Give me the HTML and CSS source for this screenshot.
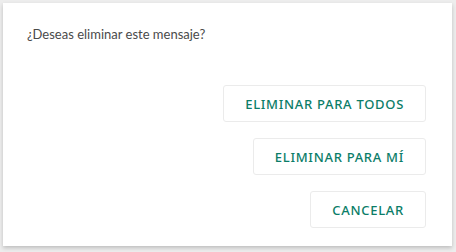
FILE: index.html
```html
<!DOCTYPE html>
<html lang="es">
<head>
    <meta charset="UTF-8">
    <meta name="viewport" content="width=device-width, initial-scale=1.0">
    <title>Eliminar mensaje</title>
    <link rel="stylesheet" href="styles.css">
</head>
<body>
    <div class="dialog">
        <div class="dialog-title">¿Deseas eliminar este mensaje?</div>
        <div class="dialog-actions">
            <button class="btn">ELIMINAR PARA TODOS</button>
            <button class="btn">ELIMINAR PARA MÍ</button>
            <button class="btn">CANCELAR</button>
        </div>
    </div>
</body>
</html>
```

FILE: styles.css
```css
html, body {
    margin: 0;
    height: 100%;
}
body {
    font-family: "Noto Sans", "Open Sans", Arial, sans-serif;
    background-color: #ededed;
    padding: 3px 4px 6px 3px;
    box-sizing: border-box;
}
.dialog {
    background: white;
    height: 100%;
    box-sizing: border-box;
    padding: 22px 26px 20px 24px;
    box-shadow: 0 2px 4px rgba(0,0,0,0.2);
}
.dialog-title {
    font-family: Lato, "Noto Sans", sans-serif;
    font-size: 13px;
    color: #4a4a4a;
    line-height: 18px;
}
.dialog-actions {
    margin-top: 42px;
    display: flex;
    flex-direction: column;
    align-items: flex-end;
    gap: 16px;
}
.btn {
    font-family: inherit;
    height: 37px;
    padding: 0 21px;
    background: white;
    border: 1px solid #ebebeb;
    border-radius: 3px;
    color: #0b7d68;
    font-size: 13px;
    font-weight: 500;
    letter-spacing: 0.7px;
    cursor: pointer;
}
```
